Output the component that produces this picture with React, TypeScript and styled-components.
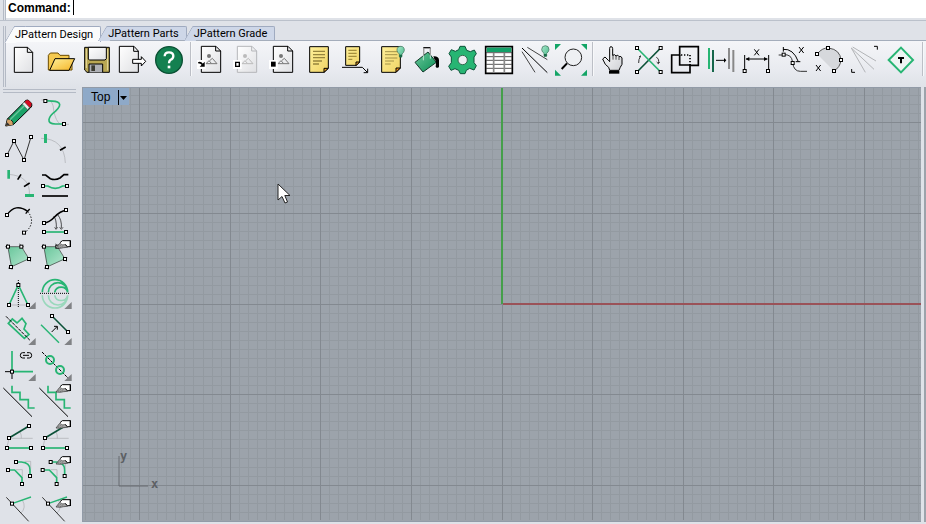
import React, { ReactNode } from "react";
import styled, { createGlobalStyle, css } from "styled-components";

const ink = "#000";
const green = "#27b573";
const deep = "#0c5238";
const grey = "#a9abaf";

const GlobalStyle = createGlobalStyle`
  *, *::before, *::after { box-sizing: border-box; }
  html, body, #root { height: 100%; }
  body {
    margin: 0;
    overflow: hidden;
    background: #dfe2e8;
    color: #000;
    font-family: Roboto, "Liberation Sans", sans-serif;
    font-size: 12px;
  }
`;

const Window = styled.div`
  height: 100%;
  display: flex;
  flex-direction: column;
`;

const gripLines = css`
  border: 0 solid #b4bac5;
`;

const CommandBar = styled.div`
  display: flex;
  height: 21px;
  padding-left: 3px;
  border-bottom: 1px solid #bbc1cb;
`;

const VerticalGrip = styled.div`
  ${gripLines}
  flex: none;
  width: 3px;
  border-left-width: 1px;
  border-right-width: 1px;
`;

const CommandField = styled.div`
  flex: 1;
  height: 18px;
  display: flex;
  align-items: center;
  gap: 2px;
  padding: 0 2px 3px;
  background: #fff;
`;

const CommandLabel = styled.label`
  font: bold 12px/14px "Liberation Sans", sans-serif;
`;

const CommandInput = styled.input`
  flex: 1;
  height: 15px;
  padding: 0;
  border: 0;
  border-left: 1px solid #000;
  outline: 0;
  background: transparent;
`;

const ToolPanel = styled.section`
  display: flex;
  height: 66px;
  padding: 5px 0 0 3px;
`;

const PanelBody = styled.div`
  flex: 1;
  min-width: 0;
  display: flex;
  flex-direction: column;
`;

const TabList = styled.div`
  display: flex;
  height: 15px;
  padding-left: 8px;
  box-shadow: inset 0 -1px #a4adbb;
`;

const Tab = styled.button<{ $active?: boolean }>`
  position: relative;
  z-index: 0;
  height: ${(p) => (p.$active ? "16px" : "15px")};
  padding: 0 7px 0 1px;
  margin-right: 6px;
  border: 1px solid #a0abc0;
  border-left: 0;
  border-bottom: ${(p) => (p.$active ? "0" : "1px solid #a4adbb")};
  border-radius: 0 2px 0 0;
  background: ${(p) => (p.$active ? "#fafbfc" : "#ced7e8")};
  font: 11px/14px Roboto, "Liberation Sans", sans-serif;
  white-space: nowrap;
  &::before {
    content: "";
    position: absolute;
    z-index: -1;
    inset: -1px auto -1px -5px;
    width: 12px;
    border: 1px solid #a0abc0;
    border-right: 0;
    border-bottom: 0;
    border-radius: 2px 0 0 0;
    background: inherit;
    transform: skewX(-30deg);
  }
`;

const Toolbar = styled.div`
  flex: 1;
  display: flex;
  align-items: flex-start;
  padding-top: 1px;
  background: linear-gradient(#f4f5f8, #e9ebf0 60%, #dfe2e8);
`;

const Separator = styled.span<{ $gap?: number }>`
  flex: none;
  width: 2px;
  height: 34px;
  margin: 0 2px 0 ${(p) => p.$gap ?? 2}px;
  border-left: 1px solid #bcbfc6;
  border-right: 1px solid #f7f8fa;
`;

const ToolButton = styled.button`
  flex: none;
  display: block;
  width: 36px;
  height: 36px;
  padding: 0;
  border: 0;
  background: transparent;
`;

const Art = styled.svg`
  display: block;
  width: 36px;
  height: 36px;
  fill: none;
`;

const Workspace = styled.div`
  flex: 1;
  min-height: 0;
  display: flex;
`;

const SidePanel = styled.aside`
  flex: none;
  width: 82px;
  padding: 2px 0 0 1px;
  overflow: hidden;
`;

const HorizontalGrip = styled.div`
  ${gripLines}
  width: 73px;
  height: 4px;
  margin: 0 0 2px 2px;
  border-top-width: 1px;
  border-bottom-width: 1px;
`;

const SideTools = styled.div`
  display: grid;
  grid-template-columns: 36px 36px;
`;

const Viewport = styled.main`
  position: relative;
  flex: 1;
  min-width: 0;
  margin-bottom: 2px;
  overflow: hidden;
  background: #9ca3ab;
  border: 1px solid #929ba7;
  border-right: 0;
`;

const NextViewport = styled.div`
  flex: none;
  width: 2px;
  margin: 0 0 2px 3px;
  background: #9ca3ab;
`;

const Scene = styled.svg`
  position: absolute;
  left: 0;
  top: 0;
  width: 100%;
  height: calc(100% - 1px);
`;

const ViewportTitle = styled.div`
  position: relative;
  display: inline-flex;
  height: 17px;
  background: #8ea9c8;
`;

const TitleButton = styled.button`
  height: 17px;
  padding: 0 8px;
  border: 0;
  background: transparent;
  font: 12px/18px "Liberation Sans", sans-serif;
`;

const MenuButton = styled.button`
  width: 11px;
  height: 15px;
  margin: 2px 0 0;
  padding: 0 0 0 1px;
  border: 0;
  border-left: 1px solid #000;
  background: transparent;
`;

const MenuArrow = styled.svg`
  display: block;
  width: 7px;
  height: 4px;
`;

const Triad = styled.svg`
  position: absolute;
  left: 35px;
  bottom: 27px;
  width: 44px;
  height: 44px;
  fill: #5d6064;
  font: bold 12px "DejaVu Sans Mono", monospace;
`;

const Pointer = styled.svg`
  position: absolute;
  left: 194px;
  top: 95px;
  width: 14px;
  height: 22px;
`;

const HiddenDefs = styled.svg`
  position: absolute;
  width: 0;
  height: 0;
`;

/* Icon artwork is drawn on strips of 108-unit cells; three units are one pixel. */
const CELL = 108;

function Node({ x, y }: { x: number; y: number }) {
  return <rect x={x - 4.5} y={y - 4.5} width="9" height="9" fill="#fff" stroke={ink} strokeWidth="3" />;
}
function Line({ d, c = ink, w = 3, dash, fill = "none" }: { d: string; c?: string; w?: number; dash?: string; fill?: string }) {
  return <path d={d} stroke={c} strokeWidth={w} strokeDasharray={dash} fill={fill} />;
}
function Corner({ x, y }: { x: number; y: number }) {
  return <path d={`M${x} ${y}V${y - 21}L${x - 22} ${y}Z`} fill="#808285" />;
}
function Cross({ x, y }: { x: number; y: number }) {
  return <Line d={`M${x - 7} ${y - 9}L${x + 7} ${y + 9}M${x + 7} ${y - 9}L${x - 7} ${y + 9}`} />;
}
function Pen({ x, y }: { x: number; y: number }) {
  return (
    <g transform={`translate(${x} ${y})`}>
      <path d="M1 11L12-3 24-5 36 9 24 10 14 12Z" fill="#a3a3a3" stroke="#333" strokeWidth="2" />
      <path d="M8 8L22-3M14 10L28-1" stroke="#444" strokeWidth="2" strokeDasharray="3 3" />
      <path d="M13-5L20-11H43V7H35L28-1H18Z" fill="#fff" />
      <path d="M13-5L20-11H43M43 7H35L29 0" stroke={ink} strokeWidth="3" />
      <path d="M44-12V8" stroke={ink} strokeWidth="4" />
    </g>
  );
}
function Picture({ x, soft = false }: { x: number; soft?: boolean }) {
  const outline = soft ? "#b5b6ba" : ink;
  const scene = soft ? "#bbb" : "#777";
  return (
    <>
      <path d={`M${x} 19H${x + 44}L${x + 58} 33V97H${x}Z`} fill="url(#paper)" stroke={outline} strokeWidth="3" />
      <Line d={`M${x + 43} 19V33H${x + 58}`} c={outline} />
      <circle cx={x + 23} cy="48" r="6" fill={scene} />
      <Line d={`M${x + 14} 71L${x + 23} 62 ${x + 31} 71ZM${x + 25} 62L${x + 33} 55 ${x + 47} 71H${x + 31}`} c={scene} />
    </>
  );
}
function Bulb({ x, y }: { x: number; y: number }) {
  return (
    <>
      <path d={`M${x - 11} ${y}Q${x - 11} ${y - 12} ${x} ${y - 12}T${x + 11} ${y}Q${x + 10} ${y + 7} ${x + 4} ${y + 11}V${y + 19}H${x - 4}V${y + 11}Q${x - 10} ${y + 7} ${x - 11} ${y}Z`} fill="url(#mint)" stroke="#376955" strokeWidth="2" />
      <path d={`M${x - 4} ${y + 13}H${x + 4}V${y + 21}H${x - 4}Z`} fill="#176a46" />
    </>
  );
}

const fileTools: [string, ReactNode][] = [
  ["New", <>
    <path d="M43 22H83L98 37V97H43Z" fill="url(#paper)" stroke={ink} strokeWidth="3" /><Line d="M82 22V37H98" />
  </>],
  ["Open", <>
    <path d="M145 90V46L151 39H174L180 46H207V60H216V90Z" fill="#f5c94f" stroke="#6b4b00" strokeWidth="3" />
    <path d="M149 91L165 56H224L207 91Z" fill="url(#gold)" stroke={ink} strokeWidth="3" />
  </>],
  ["Save", <>
    <path d="M254 22H328V97H261L254 90Z" fill="#b9a753" stroke={ink} strokeWidth="3" />
    <path d="M265 22H319V56L315 60H268L265 57Z" fill="url(#paper)" stroke={ink} strokeWidth="3" />
    <path d="M267 97V72H308V97" fill="#aeb0b5" stroke={ink} strokeWidth="3" />
    <path d="M274 76H285V93H274Z" fill="#3b3b32" /><path d="M259 27V84M323 27V91" stroke="#e8dda0" strokeWidth="3" />
  </>],
  ["Export", <>
    <path d="M358 19H402L415 33V97H358Z" fill="url(#paper)" stroke={ink} strokeWidth="3" /><Line d="M401 19V34H415" />
    <path d="M398 58H424V50L437 64 424 78V70H398Z" fill="#fff" stroke={ink} strokeWidth="3" />
  </>],
  ["Help", <>
    <circle cx="507" cy="60" r="40" fill="#138050" stroke="#0a5033" strokeWidth="4" />
    <path d="M494 49Q494 37 507 37 520 37 520 48 520 56 511 60 507 63 507 70" stroke="#fff" strokeWidth="7" fill="none" /><path d="M503 77H511V85H503Z" fill="#fff" />
  </>],
];

const sheetTools: [string, ReactNode][] = [
  ["Insert picture", <><Picture x={34} /><path d="M21 60H47V87H21Z" fill="#fff" /><Line d="M25 69Q31 65 38 74" w={5} /><path d="M44 65V80H29Z" fill={ink} /></>],
  ["Unlock picture", <><Picture x={142} soft /><path d="M129 60H155V87H129Z" fill="#fff" /><path d="M137 67H148V79H137Z" fill="#fff" stroke={ink} strokeWidth="4" /></>],
  ["Lock picture", <><Picture x={250} /><path d="M237 60H263V87H237Z" fill="#fff" /><path d="M243 65H257V80H243Z" fill={ink} /></>],
  ["Notes", <>
    <path d="M359 20H415V85L402 97H359Z" fill="url(#note)" stroke={ink} strokeWidth="3" />
    <path d="M402 97V85H415Z" fill="#f5a41e" stroke={ink} strokeWidth="3" />
    <Line d="M369 34H405M369 44H405M369 53H405M369 63H396M369 72H387" c="#97853d" w={4} />
  </>],
  ["Note leader", <>
    <path d="M467 20H509V66L499 76H467Z" fill="url(#note)" stroke={ink} strokeWidth="3" />
    <path d="M498 77V66H509Z" fill="#f5a41e" stroke={ink} strokeWidth="3" />
    <Line d="M475 31H500M475 40H500M475 49H500M475 58H487" c="#a58f3c" w={4} />
    <Line d="M456 82H517L532 97M533 86V98H521" />
  </>],
  ["Note visibility", <>
    <path d="M575 20H631V84L618 97H575Z" fill="url(#note)" stroke={ink} strokeWidth="3" />
    <path d="M618 97V84H631Z" fill="#f58c18" stroke={ink} strokeWidth="3" />
    <Line d="M585 35H622M585 44H622M585 54H622M585 63H612M585 72H602" c="#786a2c" w={2} /><Bulb x={632} y={31} />
  </>],
];

const viewTools: [string, ReactNode][] = [
  ["Fill", <>
    <Line d="M71 48V24H91V57" /><path d="M45 67L84 36 109 67 69 96Z" fill="url(#emerald)" stroke="#12382a" strokeWidth="3" />
    <Line d="M70 61V25H91V56" c="#fff" w={2} /><Line d="M70 23H91" /><path d="M100 49Q116 48 117 60V80Q112 87 107 80 110 62 103 57Z" fill={ink} />
  </>],
  ["Settings", <>
    <path d="M180 19H195L200 31 211 35 223 30 229 41 222 51V68L229 77 222 90 209 85 199 91 195 101H181L176 91 165 86 153 91 146 79 154 68V51L147 41 154 29 166 34 176 29Z" fill={green} stroke={deep} strokeWidth="3" />
    <circle cx="188" cy="60" r="14" fill="#eceef2" stroke="#36684f" strokeWidth="3" />
  </>],
  ["Table", <>
    <path d="M257 20H337V100H257Z" fill="#fff" stroke={ink} strokeWidth="5" /><path d="M260 23H334V36H260Z" fill="#13a068" />
    <Line d="M259 38H335M259 50H335M259 61H335M259 73H335M259 85H335" w={2} /><Line d="M281 39V98M313 39V98" c="#888" w={5} />
  </>],
  ["Show lines", <>
    <Line d="M366 24L442 98" /><Line d="M366 35L405 97M382 22L442 59" c="#444" /><Bulb x={436} y={29} />
  </>],
  ["Zoom extents", <>
    <path d="M465 12H483L465 30ZM561 12V30L543 12ZM465 107V89L483 107ZM561 107H543L561 89Z" fill="#13a566" />
    <circle cx="520" cy="52" r="25" fill="#eef0f3" stroke="#222" strokeWidth="3" /><path d="M501 70L485 87" stroke={ink} strokeWidth="6" />
  </>],
];

const editTools: [string, ReactNode][] = [
  ["Pan", <>
    <path d="M59 91L56 82 46 73 38 57 45 51 55 61 59 65V25Q59 20 63 20 68 20 68 26V46Q74 41 78 48 84 42 87 50 94 47 96 54V73Q90 82 87 91Z" fill="url(#hand)" stroke={ink} strokeWidth="3" />
    <Line d="M69 45V59M78 48V59M87 51V60" w={2} /><path d="M57 92H88V101H57Z" fill={ink} />
  </>],
  ["Mirror", <>
    <Line d="M212 24L141 96" c={deep} w={5} /><Line d="M141 24L212 96" c={green} w={5} />
    <Line d="M152 48Q145 58 146 69M199 52Q209 57 205 71M200 66L205 71 209 66M147 51L152 47" c="#333" />
    <Node x={141} y={24} /><Node x={212} y={24} /><Node x={141} y={96} /><Node x={212} y={96} />
  </>],
  ["Boolean", <>
    <path d="M269 20H325V76H300V98H245V45H269Z" stroke={ink} strokeWidth="5" /><Line d="M273 45H300V76" w={5} dash="4 5" /><Line d="M269 45V75H302" w={5} />
  </>],
  ["Align", <>
    <Line d="M357 24V87" c={green} w={6} /><Line d="M369 30V96" c="#16674b" w={6} /><Line d="M417 24V87" c="#777" w={5} /><Line d="M430 30V96" c="#888" w={6} />
    <Line d="M378 61H405" /><path d="M402 54L409 61 402 68Z" fill={ink} />
  </>],
  ["Dimension", <>
    <Line d="M464 45V90M536 45V90M468 57H532" /><path d="M467 57L478 51V63ZM533 57L522 51V63Z" fill={ink} /><Cross x={500} y={37} /><Node x={464} y={93} /><Node x={534} y={93} />
  </>],
  ["Offset curve", <>
    <Line d="M566 45H580Q605 40 608 68 611 94 631 94H651" c="#333" /><Line d="M579 28Q610 25 625 65M580 21V35M617 65H631" />
    <Cross x={634} y={30} /><Node x={581} y={44} /><Node x={608} y={69} />
  </>],
  ["Arc", <>
    <path d="M681 42Q698 23 716 24 751 29 753 61 749 82 732 93Z" fill="#d6d8dc" /><Line d="M681 42Q698 22 716 24 751 29 753 61 750 82 732 93" c="#555" />
    <Cross x={685} y={84} /><Node x={681} y={42} /><Node x={714} y={24} /><Node x={753} y={60} /><Node x={732} y={93} />
  </>],
  ["Ray lines", <>
    <Line d="M784 24L826 97M784 24L852 88M788 21L858 63" c="#b2b4b7" /><Line d="M852 19H862V29M785 87V97H795" />
  </>],
  ["Text tag", <>
    <path d="M933 23L969 60 933 97 896 60Z" fill="#eef4f2" stroke={green} strokeWidth="6" /><Line d="M924 54H942M933 54V70" w={6} />
  </>],
];

const quad = (dx: number) => (
  <>
    <path d={`M${24 + dx} 140H${64 + dx}L${87 + dx} 177 ${33 + dx} 201Z`} fill="url(#leaf)" />
    <Line d={`M${15 + dx} 140H${72 + dx}M${59 + dx} 131L${92 + dx} 185M${94 + dx} 173L${24 + dx} 205M${22 + dx} 132L${36 + dx} 209`} c="#333" w={2} />
    <Node x={24 + dx} y={140} /><Node x={64 + dx} y={140} /><Node x={87 + dx} y={177} /><Node x={33 + dx} y={201} />
  </>
);
const stairs = (dx: number) => (
  <><Line d={`M${10 + dx} 234L${96 + dx} 320`} /><Line d={`M${36 + dx} 227V247H${60 + dx}V269H${85 + dx}V294H${104 + dx}`} c={green} w={5} /></>
);
const hinge = (dx: number) => (
  <>
    <Line d={`M${27 + dx} 73H${98 + dx}M${27 + dx} 73L${21 + dx} 99M${60 + dx} 53Q${65 + dx} 63 ${64 + dx} 73`} c={grey} w={2} />
    <Line d={`M${27 + dx} 72L${87 + dx} 36`} c={deep} w={5} /><Line d={`M${21 + dx} 102H${93 + dx}`} c={green} w={5} />
    <Node x={27 + dx} y={72} /><Node x={21 + dx} y={102} /><Node x={93 + dx} y={102} />
  </>
);
const fillet = (dx: number) => (
  <>
    <Line d={`M${74 + dx} 142H${92 + dx}V164M${48 + dx} 167H${67 + dx}V188`} c={grey} w={2} />
    <Line d={`M${48 + dx} 144H${64 + dx}Q${90 + dx} 146 ${90 + dx} 167V186M${24 + dx} 168H${44 + dx}L${66 + dx} 191V210`} c={green} w={5} />
    <Node x={48 + dx} y={144} /><Node x={90 + dx} y={186} /><Node x={24 + dx} y={168} /><Node x={66 + dx} y={210} />
  </>
);
const angle = (dx: number) => (
  <>
    <Line d={`M${67 + dx} 258Q${80 + dx} 281 ${63 + dx} 297`} c={grey} w={2} /><Line d={`M${19 + dx} 250L${86 + dx} 322`} c="#333" />
    <Line d={`M${36 + dx} 269L${93 + dx} 249`} c={green} w={4} /><Node x={36 + dx} y={269} />
  </>
);

const sideStrips: { top: number; tools: [string, ReactNode][] }[] = [
  { top: 15, tools: [
    ["Pencil", <>
      <path d="M17 108L22 87 72 37Q76 29 84 30L95 40Q98 49 91 54L40 104Z" fill="#1ba268" stroke={ink} strokeWidth="3" />
      <path d="M17 108L23 87 31 89 39 97 39 104Z" fill="#d4a067" /><path d="M17 108L20 96 29 104Z" fill="#333" /><path d="M23 87L31 88 39 96 39 103" stroke={ink} strokeWidth="2" />
      <path d="M73 37L79 31H86L94 40V48L89 53Z" fill="#d60920" /><path d="M67 42L73 36 88 52 83 59Z" fill="#eee" stroke="#666" strokeWidth="2" /><path d="M30 89L73 47" stroke="#69c59a" strokeWidth="4" />
    </>],
    ["Curve", <><Line d="M124 30H142Q160 32 161 60 167 95 182 103H207" c={grey} w={2} /><Line d="M136 33C178 31 192 40 166 64 144 80 137 102 166 102H191" c={green} w={5} /><Node x={136} y={33} /><Node x={192} y={102} /></>],
    ["Polyline", <><Line d="M21 195L42 153 72 210 93 141" c="#333" /><Node x={21} y={195} /><Node x={42} y={153} /><Node x={72} y={210} /><Node x={93} y={141} /></>],
    ["Divide curve", <><Line d="M123 145Q193 146 196 219" c={grey} w={2} /><path d="M132 132H141V159H132Z" fill={green} /><Line d="M180 181L197 171" w={5} /></>],
    ["Divide by length", <><Line d="M24 253Q93 257 88 316" c={grey} w={2} /><path d="M22 240H30V266H22ZM75 312H102V321H75Z" fill={green} /><Line d="M53 269L63 253M72 290L89 279" w={5} /></>],
    ["Average curve", <><Line d="M126 255H137L151 266Q166 272 180 264L192 254H205" w={5} /><Line d="M129 288H143Q166 302 188 288H201" c={green} w={5} /><Line d="M126 318H204" w={5} /><Node x={129} y={288} /><Node x={201} y={288} /></>],
  ] },
  { top: 9, tools: [
    ["Extend arc", <><Line d="M21 45Q46 8 83 34" w={4} /><Line d="M83 34Q109 67 77 96" dash="4 5" /><Line d="M77 41L89 27" w={4} /><Node x={21} y={45} /><Node x={72} y={98} /></>],
    ["Project curve", <><Line d="M161 48Q170 59 169 84M173 44Q186 60 184 84M164 82L168 88 173 82M179 82L184 88 189 82" w={2} /><Line d="M132 69C162 68 165 34 198 31" w={5} /><Line d="M132 96H198" c={green} w={5} /><Node x={132} y={69} /><Node x={198} y={30} /><Node x={132} y={96} /><Node x={198} y={96} /></>],
    ["Pattern piece", quad(0)],
    ["Edit pattern piece", <>{quad(108)}<Pen x={167} y={133} /></>],
    ["Dart", <><Line d="M27 315H84" c={grey} w={2} /><Line d="M27 315L55 255 84 315" c={green} w={5} /><Line d="M55 240V324" dash="3 3" /><Node x={27} y={315} /><Node x={84} y={315} /><Node x={55} y={255} /><Corner x={107} y={327} /></>],
    ["Flounce", <>
      <Line d="M127 277A38 38 0 0 1 203 277M145 277A29 29 0 0 1 203 277M164 277A20 20 0 0 1 203 277" c={green} w={5} />
      <Line d="M127 286A38 38 0 0 0 203 286M145 286A29 29 0 0 0 203 286M164 286A20 20 0 0 0 203 286" c="#9ad8bc" w={5} />
      <Line d="M120 280H208" dash="3 3" /><Corner x={215} y={327} />
    </>],
  ] },
  { top: 3, tools: [
    ["Pocket", <><path d="M25 40L37 27 51 39 66 25 78 41 72 57 87 73 73 85Z" stroke={green} strokeWidth="5" /><Line d="M18 19L90 91" dash="10 3" /><Corner x={107} y={105} /></>],
    ["Seam", <><Line d="M156 18L204 66" c={deep} w={5} /><Line d="M123 44L177 98" c={green} w={4} /><Line d="M155 66L171 50M162 49H172V59" /><Node x={156} y={18} /><Node x={204} y={66} /><Corner x={215} y={105} /></>],
    ["Corner link", <><Line d="M36 123V185H99" c={green} w={5} /><Line d="M15 185H42M36 179V207" /><path d="M75 128H68Q61 128 61 136T68 144H75M81 128H88Q95 128 95 136T88 144H81M69 136H87" stroke={ink} strokeWidth="3" /><Node x={36} y={185} /><Corner x={107} y={213} /></>],
    ["Buttons", <><Line d="M126 126L207 207" dash="9 3" /><circle cx="150" cy="150" r="12" stroke={green} strokeWidth="6" /><circle cx="180" cy="180" r="12" stroke={green} strokeWidth="6" /><Corner x={215} y={213} /></>],
    ["Grade steps", stairs(0)],
    ["Edit grade steps", <>{stairs(108)}<Pen x={167} y={235} /></>],
  ] },
  { top: 15, tools: [
    ["Rotate line", <>{hinge(0)}<Node x={87} y={36} /></>],
    ["Edit line rotation", <>{hinge(108)}<Pen x={167} y={31} /></>],
    ["Fillet", fillet(0)],
    ["Edit fillet", <>{fillet(104)}<Pen x={167} y={139} /></>],
    ["Angle", angle(0)],
    ["Edit angle", <>{angle(108)}<Pen x={167} y={268} /></>],
  ] },
];

function Defs() {
  const ramps: [string, string, string][] = [
    ["paper", "#fff", "#dfe0e3"], ["gold", "#fff09a", "#f4b426"], ["note", "#fff09a", "#efd364"],
    ["mint", "#a9e9cd", "#47b786"], ["emerald", "#6cc89b", "#0b8f56"], ["leaf", "#69c69b", "#b6e7d0"], ["hand", "#fff", "#cfd1d5"],
  ];
  return (
    <HiddenDefs aria-hidden="true">
      <defs>
        {ramps.map(([id, from, to]) => (
          <linearGradient key={id} id={id} x2="1" y2="1"><stop stopColor={from} /><stop offset="1" stopColor={to} /></linearGradient>
        ))}
      </defs>
    </HiddenDefs>
  );
}

function Tool({ label, x, y, children }: { label: string; x: number; y: number; children: ReactNode }) {
  return (
    <ToolButton type="button" aria-label={label}>
      <Art viewBox={`${x} ${y} ${CELL} ${CELL}`} aria-hidden="true">{children}</Art>
    </ToolButton>
  );
}

function Strip({ tools, start }: { tools: [string, ReactNode][]; start: number }) {
  return <>{tools.map(([label, art], i) => <Tool key={label} label={label} x={start + i * CELL} y={6}>{art}</Tool>)}</>;
}

function Grid() {
  const step = 9.06;
  const reach = Array.from({ length: 241 }, (_, i) => i - 120);
  const path = (major: boolean) =>
    reach.filter((n) => (n % 10 === 0) === major)
      .map((n) => { const p = Math.floor(n * step); return `M${p} -1100V1100M-1100 ${p}H1100`; }).join("");
  return (
    <Scene aria-hidden="true" shapeRendering="crispEdges">
      <svg x="50%" y="50%" overflow="visible">
        <path d={path(false)} stroke="#939aa1" />
        <path d={path(true)} stroke="#838990" />
        <path d="M0 0V-1100" stroke="#459f4a" strokeWidth="2" />
        <path d="M1 0H1100" stroke="#9a5258" strokeWidth="2" />
      </svg>
    </Scene>
  );
}

export default function App() {
  return (
    <Window>
      <GlobalStyle />
      <Defs />
      <CommandBar>
        <VerticalGrip />
        <CommandField>
          <CommandLabel htmlFor="command">Command:</CommandLabel>
          <CommandInput id="command" />
        </CommandField>
      </CommandBar>
      <ToolPanel>
        <VerticalGrip />
        <PanelBody>
          <TabList role="tablist">
            <Tab role="tab" aria-selected="true" $active>JPattern Design</Tab>
            <Tab role="tab" aria-selected="false">JPattern Parts</Tab>
            <Tab role="tab" aria-selected="false">JPattern Grade</Tab>
          </TabList>
          <Toolbar role="toolbar">
            <Strip tools={fileTools} start={18} />
            <Separator $gap={4} />
            <Strip tools={sheetTools} start={12} />
            <Strip tools={viewTools} start={30} />
            <Separator />
            <Strip tools={editTools} start={18} />
            <Separator />
          </Toolbar>
        </PanelBody>
      </ToolPanel>
      <Workspace>
        <SidePanel>
          <HorizontalGrip />
          <SideTools>
            {sideStrips.map(({ top, tools }) =>
              tools.map(([label, art], i) => (
                <Tool key={label} label={label} x={i % 2 ? 111 : 3} y={top + Math.floor(i / 2) * CELL}>{art}</Tool>
              ))
            )}
          </SideTools>
        </SidePanel>
        <Viewport>
          <Grid />
          <ViewportTitle>
            <TitleButton type="button">Top</TitleButton>
            <MenuButton type="button" aria-label="Viewport menu">
              <MenuArrow viewBox="0 0 7 4"><path d="M0 0H7L3.5 4Z" /></MenuArrow>
            </MenuButton>
          </ViewportTitle>
          <Triad viewBox="0 0 44 44">
            <path d="M1 6V36H30" fill="none" stroke="#666a70" />
            <text x="2" y="10">y</text>
            <text x="33" y="38">x</text>
          </Triad>
          <Pointer viewBox="0 0 14 22">
            <path d="M1 1V17L5 13.5 8 20 10.5 19 7.8 12.5H13Z" fill="#fff" stroke="#222" />
          </Pointer>
        </Viewport>
        <NextViewport />
      </Workspace>
    </Window>
  );
}
